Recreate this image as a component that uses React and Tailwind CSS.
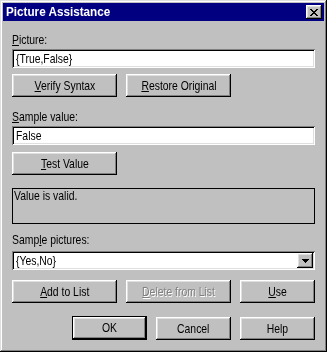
import React from "react";

const raised =
  "shadow-[inset_-1px_-1px_#000,inset_1px_1px_#fff,inset_-2px_-2px_#808080,inset_2px_2px_#dfdfdf]";
const sunken =
  "shadow-[inset_1px_1px_#808080,inset_-1px_-1px_#fff,inset_2px_2px_#000,inset_-2px_-2px_#dfdfdf]";

function U({ children }) {
  return <span className="underline underline-offset-[1px] decoration-1">{children}</span>;
}

function T({ children, center }) {
  return (
    <span
      className={`inline-block whitespace-nowrap scale-x-[0.8] ${
        center ? "origin-center" : "origin-left"
      }`}
    >
      {children}
    </span>
  );
}

function Btn({ w, children, disabled, isDefault }) {
  const inner = (
    <div
      className={`flex h-full w-full items-center justify-center bg-[#c0c0c0] ${raised} ${
        disabled ? "text-[#808080] [text-shadow:1px_1px_0_#fff]" : "text-black"
      }`}
    >
      <T center>{children}</T>
    </div>
  );
  if (isDefault) {
    return <div className={`h-[24px] ${w} border border-black`}>{inner}</div>;
  }
  return <div className={`h-[23px] ${w}`}>{inner}</div>;
}

function Label({ children, cls = "" }) {
  return (
    <div className={`h-[14px] leading-[14px] ${cls}`}>
      <T>{children}</T>
    </div>
  );
}

function Field({ children }) {
  return (
    <div className={`h-[19px] w-full bg-white ${sunken} flex items-center pl-[4px]`}>
      <span className="leading-[14px]">
        <T>{children}</T>
      </span>
    </div>
  );
}

export default function App() {
  return (
    <div
      className="relative h-[352px] w-[327px] overflow-hidden bg-[#c0c0c0] p-[3px] text-[13px] text-black shadow-[inset_-1px_-1px_#000,inset_1px_1px_#dfdfdf,inset_-2px_-2px_#808080,inset_2px_2px_#fff]"
      style={{ fontFamily: '"Liberation Sans", Arial, sans-serif' }}
    >
      {/* Title bar */}
      <div className="flex h-[18px] items-center justify-between bg-[#000080] pl-[3px] pr-[2px]">
        <span className="inline-block origin-left scale-x-[0.9] whitespace-nowrap text-[13px] font-bold leading-[14px] text-white">
          Picture Assistance
        </span>
        <div className={`flex h-[14px] w-[16px] items-center justify-center bg-[#c0c0c0] ${raised}`}>
          <svg width="8" height="7" viewBox="0 0 8 7" shapeRendering="crispEdges">
            <path
              d="M0 0h2v1H0zM6 0h2v1H6zM1 1h2v1H1zM5 1h2v1H5zM2 2h4v1H2zM3 3h2v1H3zM2 4h4v1H2zM1 5h2v1H1zM5 5h2v1H5zM0 6h2v1H0zM6 6h2v1H6z"
              fill="#000"
            />
          </svg>
        </div>
      </div>

      {/* Body */}
      <div className="box-content flex w-[303px] flex-col pl-[9px]">
        <Label cls="mt-[12px]">
          <U>P</U>icture:
        </Label>
        <div className="mt-[2px]">
          <Field>{"{True,False}"}</Field>
        </div>
        <div className="mt-[6px] flex gap-[9px]">
          <Btn w="w-[105px]">
            <U>V</U>erify Syntax
          </Btn>
          <Btn w="w-[105px]">
            <U>R</U>estore Original
          </Btn>
        </div>

        <Label cls="mt-[13px]">
          <U>S</U>ample value:
        </Label>
        <div className="mt-[2px]">
          <Field>False</Field>
        </div>
        <div className="mt-[7px] flex">
          <Btn w="w-[105px]">
            <U>T</U>est Value
          </Btn>
        </div>

        <div className="mt-[13px] h-[36px] w-full border border-black px-[1px] leading-[14px]">
          <T>Value is valid.</T>
        </div>

        <Label cls="mt-[9px]">
          Samp<U>l</U>e pictures:
        </Label>
        <div className={`mt-[4px] flex h-[19px] w-full items-center bg-white ${sunken}`}>
          <span className="flex-1 pl-[4px] leading-[14px]">
            <T>{"{Yes,No}"}</T>
          </span>
          <div className={`mr-[2px] flex h-[15px] w-[16px] items-center justify-center bg-[#c0c0c0] ${raised}`}>
            <svg width="7" height="4" viewBox="0 0 7 4" shapeRendering="crispEdges">
              <path d="M0 0h7v1H0zM1 1h5v1H1zM2 2h3v1H2zM3 3h1v1H3z" fill="#000" />
            </svg>
          </div>
        </div>

        <div className="mt-[10px] flex gap-[9px]">
          <Btn w="w-[105px]">
            <U>A</U>dd to List
          </Btn>
          <Btn w="w-[105px]" disabled>
            <U>D</U>elete from List
          </Btn>
          <Btn w="w-[75px]">
            <U>U</U>se
          </Btn>
        </div>

        <div className="mt-[13px] flex justify-end gap-[9px]">
          <Btn w="w-[75px]" isDefault>
            OK
          </Btn>
          <div className="mt-[1px] flex gap-[9px]">
            <Btn w="w-[75px]">Cancel</Btn>
            <Btn w="w-[75px]">Help</Btn>
          </div>
        </div>
      </div>
    </div>
  );
}
